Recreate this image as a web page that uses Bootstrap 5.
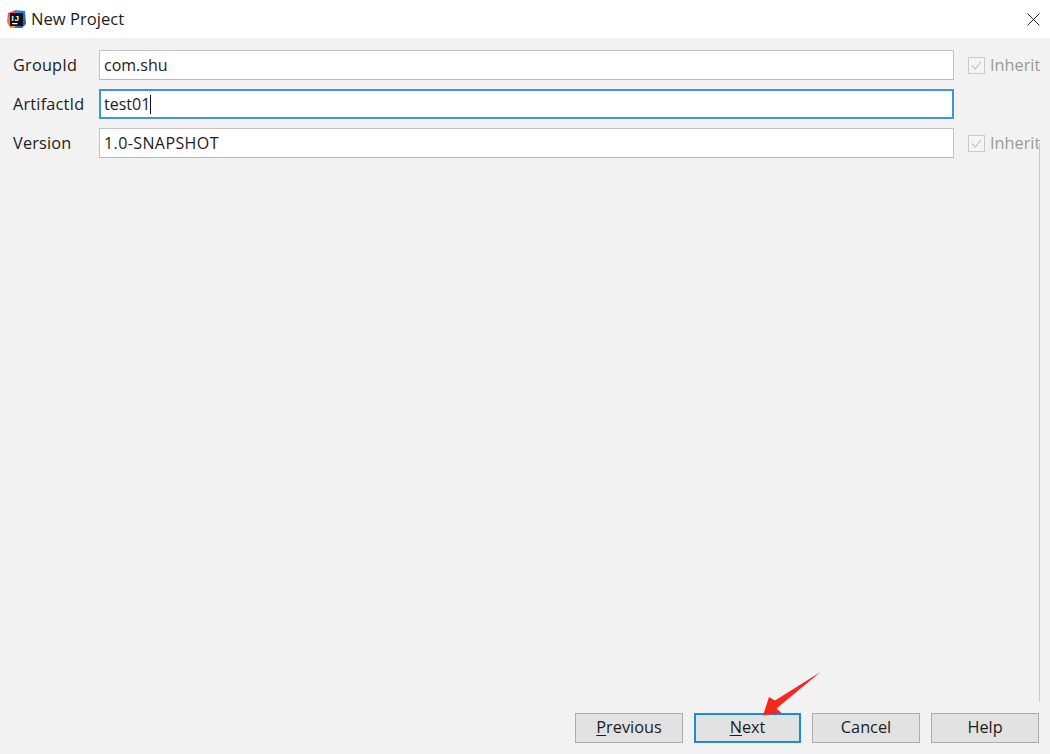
<!DOCTYPE html>
<html lang="en">
<head>
<meta charset="utf-8">
<title>New Project</title>
<link href="https://cdn.jsdelivr.net/npm/bootstrap@5.3.0/dist/css/bootstrap.min.css" rel="stylesheet">
<style>
html,body{height:100%;}
body{background:#f2f2f2;font-family:"Open Sans","Noto Sans",sans-serif;font-size:16.3px;color:#1c1c1c;overflow:hidden;}
.dlg{height:754px;position:relative;}
.dlg-title{height:38px;background:#fff;padding-left:7px;font-size:16.6px;gap:5px;}
.dlg-close{margin-left:auto;margin-right:10px;display:block;}
.dlg-form{padding:12px 10px 0 13px;gap:9px;}
.dlg-row{height:30px;}
.dlg-label{width:86px;flex:none;letter-spacing:.2px;}
.dlg-input{width:855px;flex:none;height:30px;border:1px solid #c4c4c4;border-bottom-color:#b8b8b8;border-radius:0;padding:0 4px;font-size:16px;font-family:inherit;color:#1c1c1c;background:#fff;box-shadow:none;}
.dlg-input.is-active{border:2px solid #3d97d8;padding:0 3px;box-shadow:none;}
.dlg-version{letter-spacing:.4px;}
.dlg-input:focus{box-shadow:none;}
.dlg-inherit{margin-left:14px;gap:5px;color:#9a9a9a;}
.dlg-check{width:17px;height:17px;border:1px solid #c9c9c9;background:#f4f4f4;display:block;flex:none;}
.dlg-edge{position:absolute;left:1039px;top:143px;height:559px;width:1px;background:#c9c9c9;}
.dlg-foot{padding:0 11px 11px 0;gap:11px;}
.dlg-btn{width:108px;height:30px;border:1px solid #adadad;border-radius:0;background:#e2e2e2;color:#1c1c1c;font-size:16.3px;padding:0 0 1px;line-height:1;}
.dlg-btn.is-default{width:107px;border:2px solid #1f8ad8;padding:0 0 2px;}
.dlg-btn u{text-underline-offset:2px;}
.dlg-arrow{position:absolute;left:755px;top:665px;pointer-events:none;}
.dlg-caret{display:inline-block;width:1px;height:19px;background:#111;vertical-align:middle;}
</style>
</head>
<body>
<div class="dlg d-flex flex-column">
  <div class="dlg-title d-flex align-items-center">
    <svg width="19" height="19" viewBox="0 0 19 19">
      <defs>
        <linearGradient id="gradA" x1="0" y1="0" x2="0" y2="1"><stop offset="0" stop-color="#ee3a7a"/><stop offset="1" stop-color="#f59a2c"/></linearGradient>
        <linearGradient id="gradB" x1="0" y1="0" x2="1" y2="1"><stop offset="0" stop-color="#1c9be6"/><stop offset="1" stop-color="#2a4fc0"/></linearGradient>
      </defs>
      <polygon points="1,3 9,0 9,18 3,18 0,12" fill="url(#gradA)"/>
      <polygon points="8,0 18,1 19,14 15,18 8,18" fill="url(#gradB)"/>
      <rect x="3" y="3" width="13" height="13" fill="#111"/>
      <text x="4.6" y="11" font-family="Liberation Sans" font-size="8" font-weight="700" letter-spacing=".8" fill="#fff">IJ</text>
      <rect x="5" y="13" width="5.5" height="1.2" fill="#fff"/>
    </svg>
    <span>New Project</span>
    <svg class="dlg-close" width="13" height="13" viewBox="0 0 13 13"><path d="M.5.5l12 12M12.5.5l-12 12" stroke="#222" stroke-width="1" fill="none"/></svg>
  </div>

  <div class="dlg-form d-flex flex-column">
    <div class="dlg-row d-flex align-items-center">
      <label class="dlg-label">GroupId</label>
      <input class="form-control dlg-input" value="com.shu">
      <div class="dlg-inherit d-flex align-items-center">
        <svg class="dlg-check" viewBox="0 0 17 17"><path d="M3.5 8.5l3.5 4 6.5-8" stroke="#c4c4c4" stroke-width="1.3" fill="none"/></svg>
        <span>Inherit</span>
      </div>
    </div>
    <div class="dlg-row d-flex align-items-center">
      <label class="dlg-label">ArtifactId</label>
      <div class="form-control dlg-input is-active d-flex align-items-center">test01<span class="dlg-caret"></span></div>
    </div>
    <div class="dlg-row d-flex align-items-center">
      <label class="dlg-label">Version</label>
      <input class="form-control dlg-input dlg-version" value="1.0-SNAPSHOT">
      <div class="dlg-inherit d-flex align-items-center">
        <svg class="dlg-check" viewBox="0 0 17 17"><path d="M3.5 8.5l3.5 4 6.5-8" stroke="#c4c4c4" stroke-width="1.3" fill="none"/></svg>
        <span>Inherit</span>
      </div>
    </div>
  </div>

  <div class="dlg-edge"></div>

  <div class="dlg-foot d-flex justify-content-end mt-auto">
    <button class="btn dlg-btn" type="button"><u>P</u>revious</button>
    <button class="btn dlg-btn is-default" type="button"><u>N</u>ext</button>
    <button class="btn dlg-btn" type="button">Cancel</button>
    <button class="btn dlg-btn" type="button">Help</button>
  </div>

  <svg class="dlg-arrow" width="70" height="55" viewBox="755 665 70 55">
    <polygon points="820.5,672 775,700.5 769,697 763,715.5 781.5,713 776.5,708.5" fill="#f5281e"/>
  </svg>
</div>
</body>
</html>
